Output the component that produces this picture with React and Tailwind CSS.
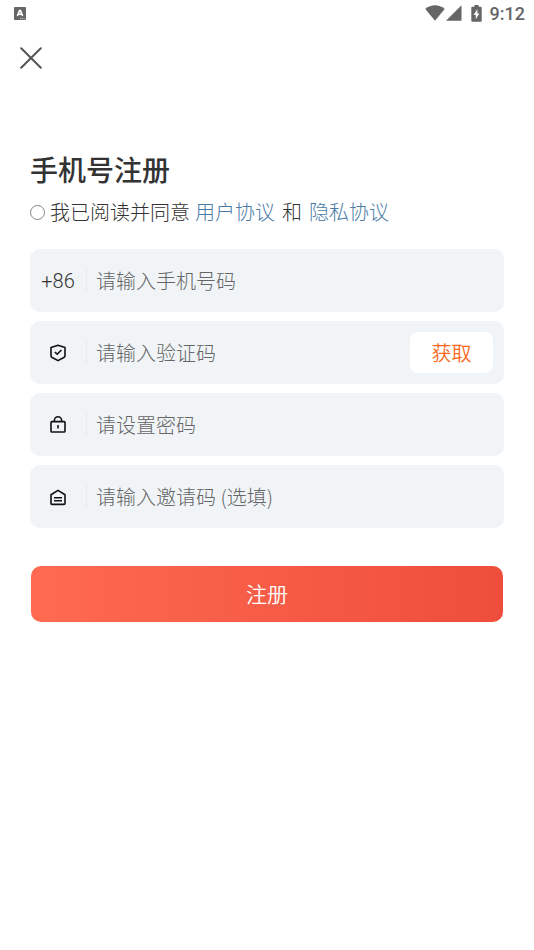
import React from "react";

function StatusBar() {
  return (
    <header className="flex h-7 items-center justify-between pl-3.5 pr-[9px] text-[#666666]">
      <svg width="12" height="13" viewBox="0 0 12 13" className="-mt-0.5" aria-hidden="true">
        <rect width="12" height="13" rx="1" fill="#666666" />
        <path d="M3.4 9 5.5 3.6h1L8.6 9M4.4 7.2h3.2" fill="none" stroke="#fff" strokeWidth="1.6" />
        <path d="M6 11.6h1M7.8 11.6h1M9.6 11.6h1" stroke="#fff" strokeWidth="0.7" />
      </svg>
      <div className="flex items-center">
        <svg width="20" height="16" viewBox="0 0 20 16" fill="#666666" className="-mt-0.5" aria-hidden="true">
          <path d="M0.3 4C6-1 14-1 19.7 4L10 15.7Z" />
        </svg>
        <svg className="-mt-0.5 ml-px" width="16" height="16" viewBox="0 0 16 16" fill="#666666" aria-hidden="true">
          <path d="M15.5 0.2V15.8H0Z" />
        </svg>
        <svg className="-mt-0.5 ml-[9px]" width="11" height="17" viewBox="0 0 11 17" aria-hidden="true">
          <path d="M3.4 0h4.2v1.8h2.1q1 0 1 1V15.7q0 1-1 1H1.3q-1 0-1-1V2.8q0-1 1-1h2.1z" fill="#666666" />
          <path d="M6.4 4 2.6 9.9h2.2v4.4L8.4 8.4H6.4z" fill="#fff" />
        </svg>
        <span className="ml-2 font-[Roboto,sans-serif] text-lg leading-7 font-medium">9:12</span>
      </div>
    </header>
  );
}

function ShieldIcon() {
  return (
    <svg width="16" height="18" viewBox="0 0 16 18" fill="none" stroke="#111" strokeWidth="1.6" aria-hidden="true">
      <path d="M8 1.2 15 3.4V11.4Q15 12.8 13.8 13.5L8 16.6 2.2 13.5Q1 12.8 1 11.4V3.4Z" strokeLinejoin="round" />
      <path d="M4.8 8 7.2 10.2 11.4 6" />
    </svg>
  );
}

function LockIcon() {
  return (
    <svg width="16" height="18" viewBox="0 0 16 18" fill="none" stroke="#111" strokeWidth="1.6" aria-hidden="true">
      <rect x="1" y="5.6" width="14" height="10.4" rx="0.8" />
      <path d="M4.4 5.4V4.4a3.6 3.6 0 0 1 7.2 0V5.4M8 9v3.4" />
    </svg>
  );
}

function InviteIcon() {
  return (
    <svg width="16" height="18" viewBox="0 0 16 18" fill="none" stroke="#111" strokeWidth="1.6" aria-hidden="true">
      <path d="M1 6.8 8 2.4 15 6.8V15.4Q15 16.4 14 16.4H2Q1 16.4 1 15.4Z" strokeLinejoin="round" />
      <path d="M4 9.8h8M4 12.8h8" />
    </svg>
  );
}

function Field({ id, label, type = "text", lead, children }) {
  return (
    <div className="flex h-[63px] items-center rounded-[10px] bg-[#f0f4f7] pr-[11px]">
      <label htmlFor={id} aria-label={label} className="flex w-14 shrink-0 justify-center">
        {lead}
      </label>
      <span className="h-[23px] w-px shrink-0 bg-[#e6eaee]" />
      <input
        id={id}
        type={type}
        placeholder={label}
        className="h-full min-w-0 flex-1 bg-transparent pl-[9px] text-xl font-light text-[#333333] outline-none placeholder:text-[#666666]"
      />
      {children}
    </div>
  );
}

export default function App() {
  return (
    <div className="min-h-screen bg-white font-['Noto_Sans_CJK_SC',sans-serif] text-[#333333]">
      <StatusBar />
      <button type="button" aria-label="关闭" className="ml-5 mt-[19px] block">
        <svg width="22" height="22" viewBox="0 0 22 22" fill="none" stroke="#555555" strokeWidth="2" strokeLinecap="round" aria-hidden="true">
          <path d="M1.2 1.2 20.8 20.8M20.8 1.2 1.2 20.8" />
        </svg>
      </button>

      <form className="px-[30px] pt-20" onSubmit={(e) => e.preventDefault()}>
        <h1 className="text-[28px] leading-10 font-medium">手机号注册</h1>

        <div className="mt-[9px] flex h-7 items-center text-xl font-light">
          <input
            id="agree"
            type="radio"
            className="size-[15px] shrink-0 appearance-none rounded-full border border-[#858585] bg-white checked:bg-[#f25340]"
          />
          <label htmlFor="agree" className="ml-[5px]">我已阅读并同意</label>
          <a href="#terms" className="ml-[5px] text-[#4a7ba6]">用户协议</a>
          <span className="mx-[7px]">和</span>
          <a href="#privacy" className="text-[#4a7ba6]">隐私协议</a>
        </div>

        <div className="mt-[23px] flex flex-col gap-[9px]">
          <Field
            id="phone"
            type="tel"
            label="请输入手机号码"
            lead={<span className="font-[Roboto,sans-serif] text-xl font-light">+86</span>}
          />
          <Field id="code" label="请输入验证码" lead={<ShieldIcon />}>
            <button type="button" className="h-[41px] w-[83px] shrink-0 rounded-lg bg-white text-xl font-[350] text-[#fa6a1e]">
              获取
            </button>
          </Field>
          <Field id="password" type="password" label="请设置密码" lead={<LockIcon />} />
          <Field id="invite" label="请输入邀请码 (选填)" lead={<InviteIcon />} />
        </div>

        <div className="px-px pt-[38px]">
          <button
            type="submit"
            className="block h-14 w-full rounded-[10px] bg-linear-to-r from-[#ff6a50] to-[#ee4d3c] text-[21px] font-[350] text-white"
          >
            注册
          </button>
        </div>
      </form>
    </div>
  );
}
